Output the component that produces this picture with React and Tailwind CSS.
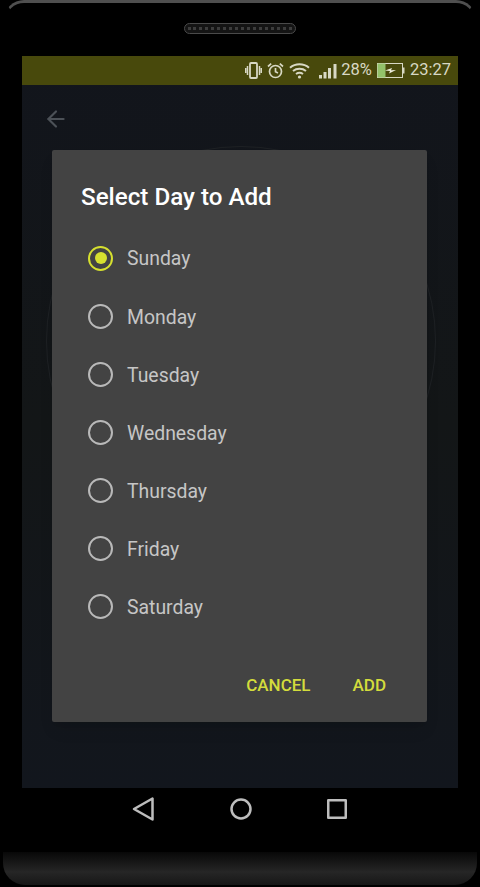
import { ArrowLeft } from 'lucide-react';

const days = ['Sunday', 'Monday', 'Tuesday', 'Wednesday', 'Thursday', 'Friday', 'Saturday'];

function StatusIcons() {
  return (
    <div className="flex items-center text-[#d8d8c4]">
      {/* vibrate */}
      <svg width="17" height="17" viewBox="0 0 17 17" className="mr-[5px]" fill="none" stroke="currentColor">
        <rect x="5" y="1" width="7" height="15" rx="1" strokeWidth="1.8" />
        <path d="M2.500 4v9M14.500 4v9M0.700 6v5M16.300 6v5" strokeWidth="1.500" />
      </svg>
      {/* alarm */}
      <svg width="17" height="17" viewBox="0 0 17 17" className="mr-[5px]" fill="none" stroke="currentColor" strokeWidth="1.700">
        <circle cx="8.500" cy="9.500" r="6" />
        <path d="M8.500 6V9.800L11 11M1 4.500 4.200 1.700M16 4.500 12.800 1.700" />
      </svg>
      {/* wifi */}
      <svg width="21" height="17" viewBox="0 0 21 17" className="mr-[9px]" fill="none" stroke="currentColor" strokeWidth="2">
        <path d="M1 5.700C6.400 1 14.600 1 20 5.700M4 9c3.700-3 9.300-3 13 0M7 12c2.100-1.500 4.900-1.500 7 0" />
        <circle cx="10.500" cy="15" r="1.600" fill="currentColor" stroke="none" />
      </svg>
      {/* signal */}
      <svg width="19" height="16" viewBox="0 0 19 16" className="mr-[3px]" fill="currentColor">
        <rect x="0" y="12" width="3" height="3.500" />
        <rect x="4.500" y="9" width="3" height="6.500" />
        <rect x="9" y="5" width="3" height="10.500" />
        <rect x="14.500" y="1" width="3" height="14.500" />
      </svg>
      <span className="mr-[5px] text-[16.500px] leading-none">28%</span>
      {/* battery charging */}
      <svg width="28" height="15" viewBox="0 0 28 15" className="mr-[5px]">
        <rect x="0.500" y="0.500" width="25" height="14" fill="none" stroke="#d8d8c4" />
        <rect x="0.500" y="0.500" width="8" height="14" fill="#93c26a" />
        <rect x="26" y="4.500" width="1.500" height="6" fill="#d8d8c4" />
        <path d="M8 7.500 15 5 14 7.300 19 7 12 10.500 13 8Z" fill="#eeeede" />
      </svg>
      <span className="text-[16.500px] leading-none">23:27</span>
    </div>
  );
}

function Radio({ checked }) {
  return (
    <span
      className={`flex h-[25px] w-[25px] items-center justify-center rounded-full border-[2.5px] ${
        checked ? 'border-[#d6e02f]' : 'border-[#b9b9b9]'
      }`}
    >
      {checked && <span className="h-[12px] w-[12px] rounded-full bg-[#d6e02f]" />}
    </span>
  );
}

export default function App() {
  return (
    <div className="flex h-[887px] w-[480px] flex-col overflow-hidden bg-black font-['Roboto',sans-serif]">
      {/* phone top edge + speaker */}
      <div className="relative h-[56px] shrink-0">
        <div className="absolute inset-x-[4px] top-0 h-[24px] rounded-t-[20px] border-x-[2px] border-t-[3px] border-x-transparent border-t-[#4f4f4f]" />
        <div className="absolute left-[184px] top-[23px] flex h-[11px] w-[112px] items-center rounded-full border-[1.5px] border-[#4a4a4a] bg-[#141414] px-[3px]">
          <div className="w-full border-t-[3px] border-dotted border-[#3c3c3c]" />
        </div>
      </div>

      {/* screen */}
      <div className="relative mx-[22px] flex h-[732px] shrink-0 flex-col bg-gradient-to-b from-[#12151c] via-[#131617] to-[#12161d]">
        <div className="flex h-[29px] items-center justify-end bg-[#48490c] pr-[7px]">
          <StatusIcons />
        </div>
        <div className="flex h-[68px] items-center pl-[21px]">
          <ArrowLeft size={26} strokeWidth={2} className="text-[#4c5157]" />
        </div>

        {/* faint ring behind the dialog */}
        <div className="absolute left-[24px] top-[90px] h-[390px] w-[390px] rounded-full border border-[#1e2124]" />

        {/* dialog */}
        <div className="absolute left-[30px] top-[94px] flex h-[572px] w-[375px] flex-col rounded-[2px] bg-[#434343] shadow-lg">
          <h2 className="pl-[29px] pt-[31px] text-[24.200px] font-medium leading-[32px] text-white">Select Day to Add</h2>
          <div className="mt-[16px] flex flex-col pl-[36px]">
            {days.map((day, i) => (
              <div key={day} className="flex h-[58.100px] items-center gap-[14px]">
                <Radio checked={i === 0} />
                <span className="pt-[2px] text-[19.400px] text-[#c6c6c6]">{day}</span>
              </div>
            ))}
          </div>
          <div className="mt-auto flex justify-end gap-[42px] pb-[26px] pr-[41px] text-[17px] font-medium leading-[22px] text-[#d3dc3c]">
            <span>CANCEL</span>
            <span>ADD</span>
          </div>
        </div>
      </div>

      {/* android nav buttons */}
      <div className="flex h-[42px] shrink-0 items-center justify-center gap-[75px] pr-[2px] text-[#bdbdbd]">
        <svg width="23" height="24" viewBox="0 0 23 24" fill="none" stroke="currentColor" strokeWidth="2.500" strokeLinejoin="round">
          <path d="M20.500 1.500V22.500L2 12Z" />
        </svg>
        <svg width="22" height="22" viewBox="0 0 22 22" fill="none" stroke="currentColor" strokeWidth="2.500">
          <circle cx="11" cy="11" r="9.500" />
        </svg>
        <svg width="20" height="20" viewBox="0 0 20 20" fill="none" stroke="currentColor" strokeWidth="2.500" strokeLinejoin="round">
          <rect x="1.250" y="1.250" width="17.500" height="17.500" />
        </svg>
      </div>

      {/* phone bottom edge */}
      <div className="mx-[3px] mt-[22px] h-[33px] shrink-0 rounded-b-[22px] bg-gradient-to-b from-[#080808] via-[#262626] via-60% to-[#171717]" />
    </div>
  );
}
